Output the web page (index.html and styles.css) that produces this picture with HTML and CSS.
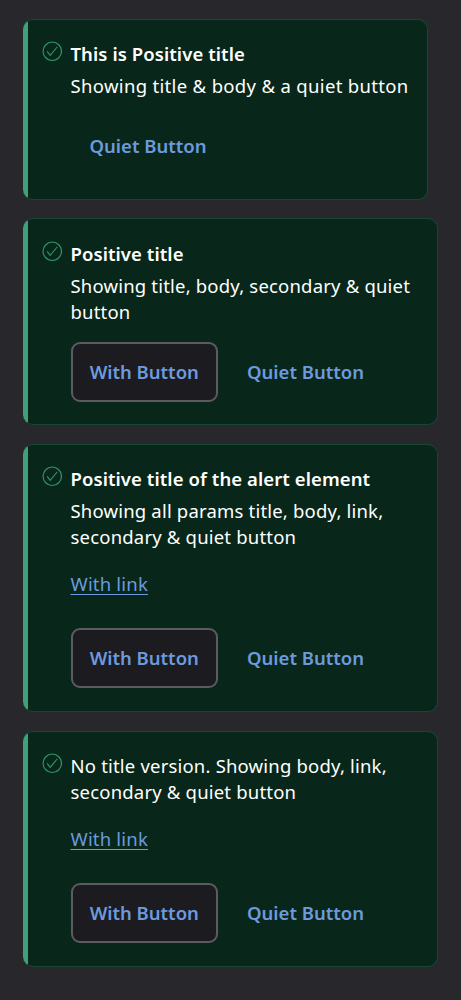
FILE: index.html
```html
<!DOCTYPE html>
<html lang="en">
<head>
<meta charset="utf-8">
<title>Positive alerts</title>
<link rel="stylesheet" href="styles.css">
</head>
<body>
<main class="stack">
  <section class="alert alert-compact">
    <svg class="icon" viewBox="0 0 20 20"><circle cx="10" cy="10" r="9"/><path d="M5 10.2 8 13.9 15 5.6"/></svg>
    <div class="content">
      <h2 class="title">This is Positive title</h2>
      <p class="body">Showing title &amp; body &amp; a quiet button</p>
      <div class="actions"><button class="btn quiet">Quiet Button</button></div>
    </div>
  </section>
  <section class="alert">
    <svg class="icon" viewBox="0 0 20 20"><circle cx="10" cy="10" r="9"/><path d="M5 10.2 8 13.9 15 5.6"/></svg>
    <div class="content">
      <h2 class="title">Positive title</h2>
      <p class="body">Showing title, body, secondary &amp; quiet<br>button</p>
      <div class="actions"><button class="btn secondary">With Button</button><button class="btn quiet">Quiet Button</button></div>
    </div>
  </section>
  <section class="alert">
    <svg class="icon" viewBox="0 0 20 20"><circle cx="10" cy="10" r="9"/><path d="M5 10.2 8 13.9 15 5.6"/></svg>
    <div class="content">
      <h2 class="title">Positive title of the alert element</h2>
      <p class="body">Showing all params title, body, link,<br>secondary &amp; quiet button</p>
      <a class="link" href="#">With link</a>
      <div class="actions after-link"><button class="btn secondary">With Button</button><button class="btn quiet">Quiet Button</button></div>
    </div>
  </section>
  <section class="alert">
    <svg class="icon" viewBox="0 0 20 20"><circle cx="10" cy="10" r="9"/><path d="M5 10.2 8 13.9 15 5.6"/></svg>
    <div class="content">
      <p class="body">No title version. Showing body, link,<br>secondary &amp; quiet button</p>
      <a class="link" href="#">With link</a>
      <div class="actions after-link"><button class="btn secondary">With Button</button><button class="btn quiet">Quiet Button</button></div>
    </div>
  </section>
</main>
</body>
</html>
```
FILE: styles.css
```css
* { box-sizing: border-box; }
body {
  margin: 0;
  min-height: 1000px;
  background: #28272c;
  color: #fff;
  font: 400 18.5px/26px "Noto Sans", sans-serif;
  letter-spacing: 0.19px;
}
.stack {
  display: flex;
  flex-direction: column;
  gap: 18.5px;
  padding: 18.6px 23px;
}
.alert {
  display: flex;
  gap: 8.5px;
  width: 415px;
  padding: 21.4px 0 22.8px 18.5px;
  border: 1px solid #164733;
  border-left: 0;
  border-radius: 10px;
  background: linear-gradient(to right, #3fa17c 5px, #08271a 5px);
}
.alert-compact { width: 405px; }
.alert-compact .body { letter-spacing: 0.33px; }
.icon {
  flex: none;
  width: 20.5px;
  height: 20.5px;
  fill: none;
  stroke: #31966c;
  stroke-width: 1.1;
}
.content { display: flex; flex-direction: column; align-items: flex-start; white-space: nowrap; }
.title { margin: 0 0 6px; font-size: 18.5px; font-weight: 600; letter-spacing: 0.08px; }
.body { margin: 0; }
.link {
  margin-top: 20.8px;
  color: #6d9ade;
  text-decoration: underline;
  text-decoration-thickness: 1px;
  text-underline-offset: 3px;
}
.actions { display: flex; gap: 10px; margin-top: 17px; }
.after-link { margin-top: 31.3px; }
.btn {
  height: 60px;
  padding: 0 17px;
  border: 2px solid transparent;
  border-radius: 9px;
  background: none;
  color: #6d9ade;
  font: 600 18.5px/26px "Noto Sans", sans-serif;
}
.secondary { width: 147.5px; padding: 0 16px; border-color: #5c5b62; background: #1c1b1f; }
```
